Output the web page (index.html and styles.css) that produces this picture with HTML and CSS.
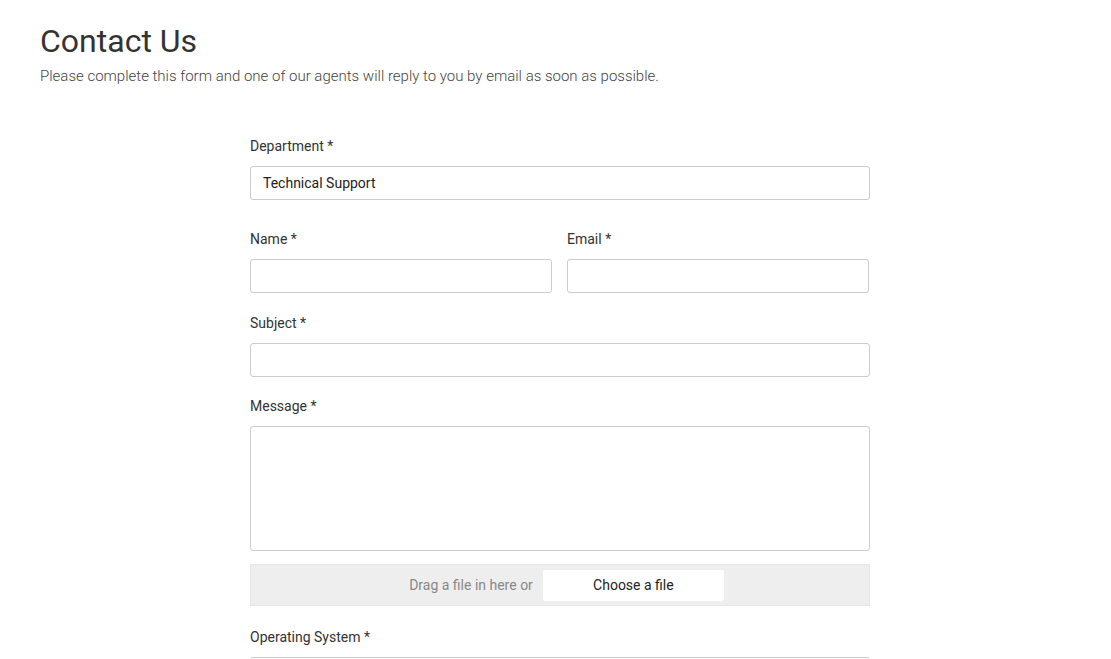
FILE: index.html
```html
<!DOCTYPE html>
<html lang="en">
<head>
<meta charset="utf-8">
<title>Contact Us</title>
<link rel="stylesheet" href="styles.css">
</head>
<body>
<div class="page">
  <h1 class="title">Contact Us</h1>
  <p class="intro">Please complete this form and one of our agents will reply to you by email as soon as possible.</p>

  <form class="form">
    <div class="field field-dept">
      <label class="label">Department *</label>
      <div class="input select">Technical Support</div>
    </div>

    <div class="row">
      <div class="field">
        <label class="label">Name *</label>
        <div class="input"></div>
      </div>
      <div class="field">
        <label class="label">Email *</label>
        <div class="input"></div>
      </div>
    </div>

    <div class="field field-subject">
      <label class="label">Subject *</label>
      <div class="input"></div>
    </div>

    <div class="field field-msg">
      <label class="label">Message *</label>
      <div class="input textarea"></div>
    </div>

    <div class="dropzone">
      <span class="drop-text">Drag a file in here or</span>
      <span class="choose">Choose a file</span>
    </div>

    <div class="field">
      <label class="label">Operating System *</label>
      <div class="input"></div>
    </div>
  </form>
</div>
</body>
</html>
```

FILE: styles.css
```css
html, body {
  margin: 0;
  padding: 0;
  background: #fff;
}
body {
  font-family: Roboto, "Liberation Sans", sans-serif;
  color: #333;
  overflow: hidden;
  height: 659px;
}
.page {
  padding: 22px 40px 0 40px;
}
.title {
  margin: 0;
  font-size: 32px;
  font-weight: 400;
  line-height: 38px;
  color: #333;
}
.intro {
  margin: 6px 0 0 0;
  font-size: 15px;
  font-weight: 300;
  line-height: 20px;
  color: #444;
}
.form {
  width: 620px;
  margin: 50px 0 0 210px;
  display: flex;
  flex-direction: column;
}
.field {
  display: flex;
  flex-direction: column;
  margin-bottom: 20px;
}
.field-dept {
  margin-bottom: 29px;
}
.field-subject {
  margin-bottom: 19px;
}
.field-msg {
  margin-bottom: 13px;
}
.label {
  font-size: 14px;
  line-height: 20px;
  color: #333;
  margin-bottom: 10px;
}
.input {
  height: 32px;
  border: 1px solid #ccc;
  border-radius: 3px;
  background: #fff;
  box-sizing: content-box;
}
.select {
  font-size: 14px;
  line-height: 32px;
  padding-left: 12px;
  color: #222;
}
.textarea {
  height: 123px;
}
.row {
  display: flex;
  gap: 15px;
  margin-right: 1px;
}
.row .field {
  flex: 1;
}
.dropzone {
  height: 40px;
  border: 1px solid #e6e6e6;
  background: #eee;
  display: flex;
  align-items: center;
  justify-content: center;
  gap: 10px;
  margin-bottom: 21px;
  padding-left: 13px;
}
.drop-text {
  font-size: 14px;
  color: #888;
}
.choose {
  width: 181px;
  height: 31px;
  background: #fff;
  border-radius: 2px;
  font-size: 14px;
  color: #222;
  display: flex;
  align-items: center;
  justify-content: center;
}
```
